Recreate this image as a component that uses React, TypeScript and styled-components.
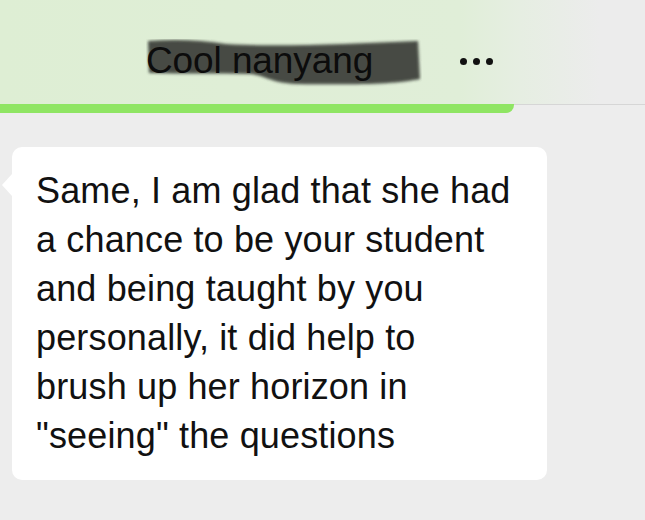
import React from "react";
import styled, { createGlobalStyle } from "styled-components";

const Global = createGlobalStyle`
  html, body { margin: 0; padding: 0; background: #ededed; }
  body { font-family: "Liberation Sans", Arial, sans-serif; width: 645px; height: 520px; overflow: hidden; }
`;

const Page = styled.div`
  width: 645px;
  height: 520px;
  display: flex;
  flex-direction: column;
  background: #ededed;
`;

const Header = styled.div`
  height: 104px;
  display: flex;
  align-items: center;
  padding: 0 0 0 146px;
  box-sizing: border-box;
  background: linear-gradient(to right, #deeed4 0px, #e0eed8 460px, #e6eee2 520px, #ececec 600px);
`;

const TitleWrap = styled.div`
  position: relative;
  width: 314px;
  height: 50px;
  display: flex;
  align-items: center;
  margin-top: 20px;
`;

const Smear = styled.svg`
  position: absolute;
  left: 0;
  top: 2px;
  width: 276px;
  height: 50px;
`;

const Title = styled.span`
  position: relative;
  font-size: 37px;
  color: #0c0c0c;
  letter-spacing: -0.1px;
  margin-top: -3px;
`;

const Dots = styled.div`
  margin-top: 18px;
  display: flex;
  gap: 6px;
`;

const Dot = styled.span`
  width: 7px;
  height: 7px;
  border-radius: 50%;
  background: #111;
`;

const BarRow = styled.div`
  display: flex;
  height: 9px;
`;

const Progress = styled.div`
  width: 514px;
  height: 9px;
  background: #8fe563;
  border-radius: 0 0 8px 0;
`;

const Divider = styled.div`
  flex: 1;
  height: 1px;
  background: #d6d6d6;
`;

const Body = styled.div`
  padding: 34px 0 0 12px;
`;

const Bubble = styled.div`
  position: relative;
  width: 535px;
  height: 333px;
  box-sizing: border-box;
  background: #ffffff;
  border-radius: 10px;
  padding: 19px 0 0 24px;
  &::before {
    content: "";
    position: absolute;
    left: -10px;
    top: 27px;
    border-style: solid;
    border-width: 11px 10px 11px 0;
    border-color: transparent #ffffff transparent transparent;
  }
`;

const Message = styled.p`
  margin: 0;
  font-size: 36px;
  line-height: 49px;
  color: #111111;
  letter-spacing: 0.15px;
`;

export default function App() {
  return (
    <Page>
      <Global />
      <Header>
        <TitleWrap>
          <Smear viewBox="0 0 276 50">
            <defs>
              <filter id="blur" x="-10%" y="-20%" width="120%" height="140%">
                <feGaussianBlur stdDeviation="1.8" />
              </filter>
            </defs>
            <path
              d="M2 2 C30 0 55 1 80 5 C130 8 200 5 272 2 L274 40 C250 45 215 46 150 45 C125 44 118 36 104 35 C70 34 40 35 3 34 Z"
              fill="#3a3d38"
              filter="url(#blur)"
              opacity="0.92"
            />
          </Smear>
          <Title>Cool nanyang</Title>
        </TitleWrap>
        <Dots>
          <Dot />
          <Dot />
          <Dot />
        </Dots>
      </Header>
      <BarRow>
        <Progress />
        <Divider />
      </BarRow>
      <Body>
        <Bubble>
          <Message>
            Same, I am glad that she had
            <br />a chance to be your student
            <br />and being taught by you
            <br />personally, it did help to
            <br />brush up her horizon in
            <br />"seeing" the questions
          </Message>
        </Bubble>
      </Body>
    </Page>
  );
}
